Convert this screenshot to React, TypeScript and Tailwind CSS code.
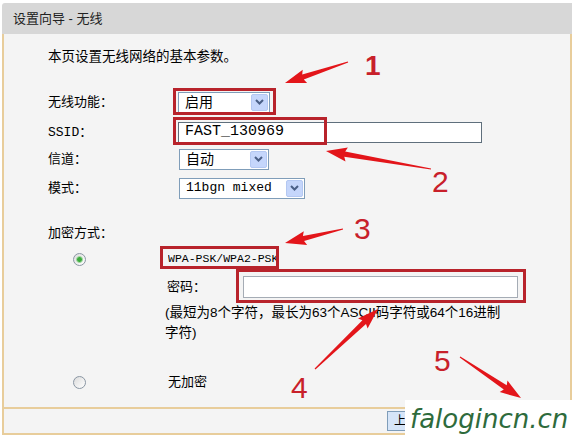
import React from "react";

const cjk = "font-['Liberation_Sans','Noto_Sans_CJK_SC',sans-serif]";
const mono = "font-['Liberation_Mono','Noto_Sans_CJK_SC',monospace]";

// red annotation arrow: thin tail widening into a head
function arrowPoints(tx: number, ty: number, hx: number, hy: number) {
  const dx = hx - tx;
  const dy = hy - ty;
  const len = Math.hypot(dx, dy);
  const ux = dx / len;
  const uy = dy / len;
  const nx = -uy;
  const ny = ux;
  const L = 19;
  const bx = hx - ux * L;
  const by = hy - uy * L;
  const pts = [
    [tx + nx * 0.6, ty + ny * 0.6],
    [bx + nx * 2.6, by + ny * 2.6],
    [bx - ux * 2 + nx * 7, by - uy * 2 + ny * 7],
    [hx, hy],
    [bx - ux * 2 - nx * 7, by - uy * 2 - ny * 7],
    [bx - nx * 2.6, by - ny * 2.6],
    [tx - nx * 0.6, ty - ny * 0.6],
  ];
  return pts.map((p) => p[0].toFixed(1) + "," + p[1].toFixed(1)).join(" ");
}

const arrows = [
  [348, 62, 285, 83],
  [431, 169, 326, 151],
  [343, 229, 285, 243],
  [315, 369, 378, 309],
  [460, 357, 521, 398],
];

function Chevron() {
  return (
    <svg width="9" height="6" viewBox="0 0 9 6">
      <path d="M1 1 L4.5 4.5 L8 1" fill="none" stroke="#4a5f86" strokeWidth="2" />
    </svg>
  );
}

function Select({ value, className, textClass }: { value: string; className: string; textClass: string }) {
  return (
    <div className={"flex h-[21px] items-center border border-[#7f9db9] bg-white " + className}>
      <span className={"flex-1 pl-[6px] " + textClass}>{value}</span>
      <div className="mr-[1px] flex h-[17px] w-[17px] items-center justify-center rounded-[2px] border border-[#b4c8f2] bg-[#c5d6fb]">
        <Chevron />
      </div>
    </div>
  );
}

function Radio({ checked }: { checked?: boolean }) {
  return (
    <div className="flex h-[13px] w-[13px] items-center justify-center rounded-full border border-[#8a96a3] bg-gradient-to-br from-[#dcdcdc] to-white">
      {checked && <div className="h-[7px] w-[7px] rounded-full border border-[#a9dba9] bg-[#3caa3c]" />}
    </div>
  );
}

export default function App() {
  return (
    <div className={"relative h-[441px] w-[576px] overflow-hidden bg-white text-[13px] text-black " + cjk}>
      <div className="ml-[2px] mt-[3px] w-[570px]">
        {/* title bar */}
        <div className="flex h-[31px] items-center rounded-tl-[3px] bg-[#d7d7d7] pl-[11px] text-[13px] text-[#222]">
          设置向导 - 无线
        </div>

        {/* body */}
        <div className="flex h-[373px] flex-col border-x-2 border-[#e8cd9b] bg-[#f4f4f4] pl-[44px]">
          <div className="mt-[13px] h-[20px] text-[13.5px] leading-[20px]">本页设置无线网络的基本参数。</div>

          <div className="mt-[23px] flex h-[24px] items-center">
            <div className="w-[130px]">无线功能：</div>
            <Select value="启用" className="w-[92px]" textClass="text-[14px]" />
          </div>

          <div className="mt-[6px] flex h-[24px] items-center">
            <div className="w-[130px]">
              <span className={mono}>SSID</span>：
            </div>
            <div className={"flex h-[21px] w-[304px] items-center border border-[#5f6f7c] bg-white pl-[6px] text-[15px] " + mono}>
              FAST_130969
            </div>
          </div>

          <div className="mt-[3px] flex h-[24px] items-center">
            <div className="w-[131px]">信道：</div>
            <Select value="自动" className="w-[90px]" textClass="text-[14px]" />
          </div>

          <div className="mt-[5px] flex h-[24px] items-center">
            <div className="w-[131px]">模式：</div>
            <Select value="11bgn mixed" className="w-[126px]" textClass={"text-[13px] " + mono} />
          </div>

          <div className="mt-[21px] flex h-[24px] items-center">加密方式：</div>

          <div className="mt-[2px] flex h-[24px] items-center">
            <div className="ml-[25px]">
              <Radio checked />
            </div>
            <span className={"ml-[82px] w-[110px] overflow-hidden whitespace-nowrap text-[11.5px] " + mono}>WPA-PSK/WPA2-PSK</span>
          </div>

          <div className="mt-[4px] flex h-[24px] items-center pl-[119px]">
            <div className="w-[76px]">密码：</div>
            <div className="h-[22px] w-[275px] border border-[#a5acb5] bg-white" />
          </div>

          <div className="mt-[4px] pl-[117px] text-[13.5px] leading-[20px]">
            <div>(最短为8个字符，最长为63个ASCII码字符或64个16进制</div>
            <div>字符)</div>
          </div>

          <div className="mt-[27px] flex h-[24px] items-center">
            <div className="ml-[25px]">
              <Radio />
            </div>
            <span className="ml-[82px]">无加密</span>
          </div>
        </div>

        {/* footer */}
        <div className="flex h-[28px] items-center border-x-2 border-y-2 border-[#e8cd9b] bg-[#f4f4f4] pl-[383px]">
          <div className="flex h-[20px] items-center border border-[#7f9db9] bg-[#d6e5f8] px-[6px] text-[12px]">上一步</div>
        </div>
      </div>

      {/* annotation boxes */}
      <div className="absolute left-[173px] top-[88px] h-[27px] w-[103px] border-[3px] border-[#b8232b]" />
      <div className="absolute left-[173px] top-[117px] h-[28px] w-[154px] border-[3px] border-[#b8232b]" />
      <div className="absolute left-[160px] top-[246px] h-[23px] w-[119px] border-[3px] border-[#b8232b]" />
      <div className="absolute left-[236px] top-[269px] h-[34px] w-[290px] border-[3px] border-[#b8232b]" />

      <svg className="pointer-events-none absolute left-0 top-0" width="576" height="441">
        {arrows.map((a, i) => (
          <polygon key={i} points={arrowPoints(a[0], a[1], a[2], a[3])} fill="#e3151a" />
        ))}
      </svg>

      <div className="absolute left-[365px] top-[52px] text-[28px] font-bold leading-none text-[#c8202a] font-['Liberation_Sans',sans-serif]">1</div>
      <div className="absolute left-[432px] top-[167px] text-[30px] leading-none text-[#c8202a] font-['Liberation_Sans',sans-serif]">2</div>
      <div className="absolute left-[354px] top-[214px] text-[30px] leading-none text-[#c8202a] font-['Liberation_Sans',sans-serif]">3</div>
      <div className="absolute left-[291px] top-[373px] text-[30px] leading-none text-[#c8202a] font-['Liberation_Sans',sans-serif]">4</div>
      <div className="absolute left-[434px] top-[346px] text-[30px] leading-none text-[#c8202a] font-['Liberation_Sans',sans-serif]">5</div>

      {/* watermark */}
      <div className="absolute left-[405px] top-[400px] flex h-[41px] w-[171px] items-center bg-white pb-[4px] pl-[5px] text-[26px] font-extralight italic leading-none text-[#2e6b3c] font-['DejaVu_Sans',sans-serif]">
        falogincn.cn
      </div>
    </div>
  );
}
